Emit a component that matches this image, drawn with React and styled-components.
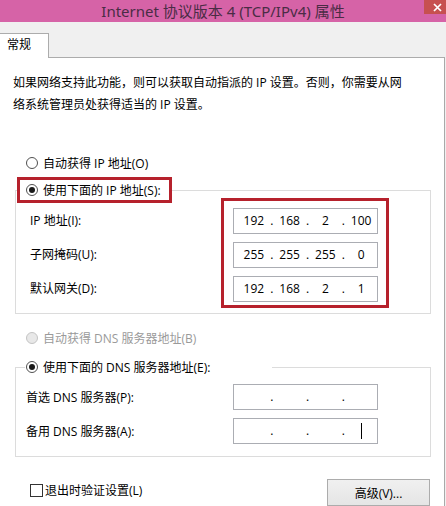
import React from "react";
import styled, { createGlobalStyle } from "styled-components";

const GlobalStyle = createGlobalStyle`
  html, body {
    margin: 0;
    padding: 0;
  }
  body {
    width: 446px;
    height: 506px;
    overflow: hidden;
    background: #f0f0f0;
    font-family: "Open Sans", "Noto Sans CJK SC", sans-serif;
    font-size: 12px;
    color: #000;
  }
`;

const Window = styled.div`
  width: 446px;
  height: 506px;
  display: flex;
  flex-direction: column;
  overflow: hidden;
`;

const TitleBar = styled.header`
  flex: none;
  height: 22px;
  background: #d663a7;
  display: grid;
  grid-template-columns: 1fr auto 1fr;
`;

const Title = styled.div`
  grid-column: 2;
  font-family: "Noto Sans", "Noto Sans CJK SC", sans-serif;
  font-size: 15px;
  line-height: 22px;
  color: #4a2c45;
  white-space: nowrap;
`;

const CloseButton = styled.div`
  grid-column: 3;
  justify-self: end;
  width: 22px;
  height: 14px;
  background: #c75050;
  display: flex;
  align-items: center;
  justify-content: center;
  padding-left: 4px;
  box-sizing: border-box;
`;

const TabStrip = styled.div`
  flex: none;
  display: flex;
  padding-top: 11px;
  margin-left: -1px;
`;

const Tab = styled.div`
  position: relative;
  z-index: 1;
  width: 50px;
  height: 25px;
  box-sizing: border-box;
  margin-bottom: -1px;
  border: 1px solid #acacac;
  border-bottom: none;
  background: #fff;
  padding-left: 7px;
  line-height: 22px;
`;

const Panel = styled.main`
  flex: 1;
  width: 446px;
  margin-left: -1px;
  box-sizing: border-box;
  background: #fff;
  border-top: 1px solid #acacac;
  border-left: 1px solid #acacac;
  border-right: 1px solid #a9a9a9;
  display: flex;
  flex-direction: column;
`;

const Description = styled.p`
  margin: 14px 0 0 13px;
  line-height: 22px;
`;

const RadioRow = styled.label`
  display: flex;
  align-items: center;
  gap: 5px;
  height: 20px;
  margin: ${(p) => p.$top || 0}px 0 0 ${(p) => p.$left ?? 26}px;
  color: ${(p) => (p.$disabled ? "#9a9a9a" : "#000")};
  white-space: nowrap;
`;

const Radio = styled.span`
  flex: none;
  width: 12px;
  height: 12px;
  box-sizing: border-box;
  border-radius: 50%;
  border: 1px solid ${(p) => (p.$disabled ? "#c4c4c4" : "#505050")};
  background: ${(p) => (p.$disabled ? "#e8e8e8" : "#fff")};
  display: flex;
  align-items: center;
  justify-content: center;

  &::after {
    content: "";
    display: ${(p) => (p.$checked ? "block" : "none")};
    width: 6px;
    height: 6px;
    border-radius: 50%;
    background: #1a1a1a;
  }
`;

const Group = styled.fieldset`
  margin: ${(p) => p.$top}px 0 0 15px;
  width: 416px;
  min-width: 0;
  box-sizing: border-box;
  border: 1px solid #dcdcdc;
  padding: ${(p) => p.$pad};
`;

const Legend = styled.legend`
  padding: 0;
  margin: 0;
`;

const Highlight = styled.div`
  border: 3px solid #b6212c;
  box-sizing: border-box;
`;

const LegendHighlight = styled(Highlight)`
  width: 155px;
  height: 26px;
  display: flex;
  align-items: center;
  padding-left: 6px;
`;

const LegendPlain = styled.div`
  width: 247px;
  height: 20px;
  display: flex;
  align-items: center;
  padding-left: 1px;
  box-sizing: border-box;
`;

const IPBody = styled.div`
  display: flex;
  margin: -5px 0 0 13px;
`;

const LabelColumn = styled.div`
  width: 191px;
  display: flex;
  flex-direction: column;
  gap: 8px;
  padding-top: 10px;
`;

const FieldLabel = styled.div`
  height: 26px;
  line-height: 26px;
  white-space: nowrap;
`;

const FieldStack = styled(Highlight)`
  display: flex;
  flex-direction: column;
  gap: 8px;
  padding: 7px 8px 3px 9px;
`;

const IPField = styled.div`
  width: 145px;
  height: 26px;
  box-sizing: border-box;
  border: 1px solid #abadb3;
  background: #fff;
  display: grid;
  grid-template-columns: 1fr 4px 1fr 4px 1fr 4px 1fr;
  align-items: center;
  padding-left: 4px;
  line-height: 24px;
`;

const Octet = styled.span`
  display: flex;
  justify-content: center;
`;

const Dot = styled.span`
  display: flex;
  justify-content: center;
`;

const Caret = styled.span`
  width: 1px;
  height: 16px;
  background: #000;
`;

const DNSRows = styled.div`
  display: flex;
  flex-direction: column;
  gap: 8px;
  margin: 7px 0 0 1px;
`;

const DNSRow = styled.div`
  display: flex;
  align-items: center;
`;

const DNSLabel = styled.div`
  width: 207px;
  white-space: nowrap;
`;

const Footer = styled.div`
  display: flex;
  justify-content: space-between;
  align-items: flex-start;
  margin-top: 22px;
  padding: 0 14px 0 30px;
`;

const CheckRow = styled.label`
  display: flex;
  align-items: center;
  gap: 2px;
  height: 22px;
`;

const Checkbox = styled.span`
  width: 13px;
  height: 13px;
  box-sizing: border-box;
  border: 1px solid #333;
  background: #fff;
`;

const Button = styled.button`
  width: 103px;
  height: 27px;
  box-sizing: border-box;
  border: 1px solid #acacac;
  background: linear-gradient(#f0f0f0, #e5e5e5);
  font-family: inherit;
  font-size: 12px;
  color: #000;
  padding: 0;
`;

function AddressField({ parts, caret }) {
  const cells = [];
  parts.forEach((part, i) => {
    if (i > 0) cells.push(<Dot key={"d" + i}>.</Dot>);
    cells.push(
      <Octet key={"o" + i}>{caret && i === 3 ? <Caret /> : part}</Octet>
    );
  });
  return <IPField>{cells}</IPField>;
}

export default function App() {
  return (
    <Window>
      <GlobalStyle />
      <TitleBar>
        <Title>Internet 协议版本 4 (TCP/IPv4) 属性</Title>
        <CloseButton>
          <svg width="9" height="9" viewBox="0 0 9 9">
            <path d="M1 1 L8 8 M8 1 L1 8" stroke="#fff" strokeWidth="1.7" />
          </svg>
        </CloseButton>
      </TitleBar>

      <TabStrip>
        <Tab>常规</Tab>
      </TabStrip>

      <Panel>
        <Description>
          如果网络支持此功能，则可以获取自动指派的 IP 设置。否则，你需要从网
          <br />
          络系统管理员处获得适当的 IP 设置。
        </Description>

        <RadioRow $top={37}>
          <Radio />
          自动获得 IP 地址(O)
        </RadioRow>

        <Group $top={4} $pad="0 0 5px 1px">
          <Legend>
            <LegendHighlight>
              <RadioRow $left={0}>
                <Radio $checked />
                使用下面的 IP 地址(S):
              </RadioRow>
            </LegendHighlight>
          </Legend>
          <IPBody>
            <LabelColumn>
              <FieldLabel>IP 地址(I):</FieldLabel>
              <FieldLabel>子网掩码(U):</FieldLabel>
              <FieldLabel>默认网关(D):</FieldLabel>
            </LabelColumn>
            <FieldStack>
              <AddressField parts={["192", "168", "2", "100"]} />
              <AddressField parts={["255", "255", "255", "0"]} />
              <AddressField parts={["192", "168", "2", "1"]} />
            </FieldStack>
          </IPBody>
        </Group>

        <RadioRow $top={14} $disabled>
          <Radio $disabled />
          自动获得 DNS 服务器地址(B)
        </RadioRow>

        <Group $top={9} $pad="0 0 12px 9px">
          <Legend>
            <LegendPlain>
              <RadioRow $left={0}>
                <Radio $checked />
                使用下面的 DNS 服务器地址(E):
              </RadioRow>
            </LegendPlain>
          </Legend>
          <DNSRows>
            <DNSRow>
              <DNSLabel>首选 DNS 服务器(P):</DNSLabel>
              <AddressField parts={["", "", "", ""]} />
            </DNSRow>
            <DNSRow>
              <DNSLabel>备用 DNS 服务器(A):</DNSLabel>
              <AddressField parts={["", "", "", ""]} caret />
            </DNSRow>
          </DNSRows>
        </Group>

        <Footer>
          <CheckRow>
            <Checkbox />
            退出时验证设置(L)
          </CheckRow>
          <Button>高级(V)...</Button>
        </Footer>
      </Panel>
    </Window>
  );
}
